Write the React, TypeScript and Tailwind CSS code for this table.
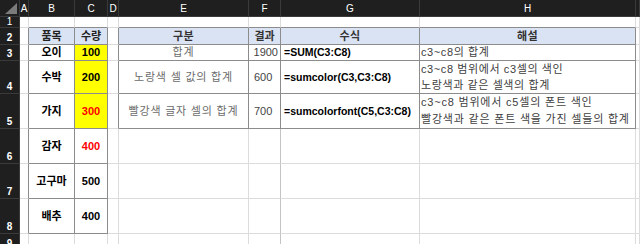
import React from "react";

const FONT = { fontFamily: '"Liberation Sans", "Noto Sans CJK KR", sans-serif' };

const COLS = ["", "A", "B", "C", "D", "E", "F", "G", "H", ""];

function content(r: number, c: number): React.ReactNode {
  const key = `${r}-${c}`;
  const map: Record<string, React.ReactNode> = {
    "2-2": <span className="w-full text-center font-bold text-[#222]">품목</span>,
    "2-3": <span className="w-full text-center font-bold text-[#222]">수량</span>,
    "2-5": <span className="w-full text-center font-semibold tracking-[0.5px] text-[#333]">구분</span>,
    "2-6": <span className="w-full text-center font-semibold text-[#333]">결과</span>,
    "2-7": <span className="w-full text-center font-semibold tracking-[0.5px] text-[#333]">수식</span>,
    "2-8": <span className="w-full text-center font-semibold tracking-[0.5px] text-[#333]">해설</span>,
    "3-2": <span className="w-full text-center font-bold text-black">오이</span>,
    "4-2": <span className="w-full text-center font-bold text-black">수박</span>,
    "5-2": <span className="w-full text-center font-bold text-black">가지</span>,
    "6-2": <span className="w-full text-center font-bold text-black">감자</span>,
    "7-2": <span className="w-full text-center font-bold text-black">고구마</span>,
    "8-2": <span className="w-full text-center font-bold text-black">배추</span>,
    "3-3": <span className="w-full text-center font-bold text-black">100</span>,
    "4-3": <span className="w-full text-center font-bold text-black">200</span>,
    "5-3": <span className="w-full text-center font-bold text-[#ff0000]">300</span>,
    "6-3": <span className="w-full text-center font-bold text-[#ff0000]">400</span>,
    "7-3": <span className="w-full text-center font-bold text-black">500</span>,
    "8-3": <span className="w-full text-center font-bold text-black">400</span>,
    "3-5": <span className="w-full text-center tracking-[0.8px] text-[#6b6b6b]">합계</span>,
    "4-5": <span className="w-full text-center tracking-[0.8px] text-[#6b6b6b]">노랑색 셀 값의 합계</span>,
    "5-5": <span className="w-full text-center tracking-[0.8px] text-[#6b6b6b]">빨강색 글자 셀의 합계</span>,
    "3-6": <span className="w-full pr-[2px] text-right text-[#444]">1900</span>,
    "4-6": <span className="w-full pl-[5px] text-left text-[#444]">600</span>,
    "5-6": <span className="w-full pl-[5px] text-left text-[#444]">700</span>,
    "3-7": <span className="w-full pl-[3px] text-left text-[10.5px] font-bold text-black">=SUM(C3:C8)</span>,
    "4-7": <span className="w-full pl-[3px] text-left text-[10.5px] font-bold text-black">=sumcolor(C3,C3:C8)</span>,
    "5-7": <span className="w-full pl-[3px] text-left text-[10.5px] font-bold text-black">=sumcolorfont(C5,C3:C8)</span>,
    "3-8": <span className="w-full pl-[1px] text-left tracking-[0.6px] text-[#404040]">c3~c8의 합계</span>,
    "4-8": (
      <div className="flex w-full flex-col gap-[5px] pl-[1px] text-left tracking-[0.6px] text-[#404040]">
        <span>c3~c8 범위에서 c3셀의 색인</span>
        <span>노랑색과 같은 셀색의 합계</span>
      </div>
    ),
    "5-8": (
      <div className="flex w-full flex-col gap-[6px] pl-[1px] text-left tracking-[0.8px] text-[#404040]">
        <span>c3~c8 범위에서 c5셀의 폰트 색인</span>
        <span>빨강색과 같은 폰트 색을 가진 셀들의 합계</span>
      </div>
    ),
  };
  return map[key];
}

function Cell({ r, c }: { r: number; c: number }) {
  if (r === 0) {
    if (c === 0) {
      return (
        <div className="relative border-r border-b border-r-[#3a3a3a] border-b-[#3a3a3a] bg-[#1f1f1f]">
          <svg className="absolute right-[2px] bottom-[2px]" width="12" height="11" viewBox="0 0 12 11">
            <polygon points="12,0 12,11 0,11" fill="#7b7b7b" />
          </svg>
        </div>
      );
    }
    return (
      <div className="flex items-center justify-center border-r border-b border-r-[#3a3a3a] border-b-[#3a3a3a] bg-[#1f1f1f] text-[10px] text-white">
        {COLS[c]}
      </div>
    );
  }
  if (c === 0) {
    return (
      <div
        className={
          r === 1
            ? "flex items-start justify-center overflow-hidden border-r border-b border-r-[#3a3a3a] border-b-[#3a3a3a] bg-[#1f1f1f] text-[10px] leading-none text-white"
            : "flex items-end justify-center overflow-hidden border-r border-b border-r-[#3a3a3a] border-b-[#3a3a3a] bg-[#1f1f1f] pb-[1px] text-[10px] font-semibold leading-none text-white"
        }
      >
        {r}
      </div>
    );
  }

  const rightDark = (r >= 2 && r <= 8 && c >= 1 && c <= 3) || (r >= 2 && r <= 5 && c >= 4 && c <= 8);
  const rightMid = r >= 6 && c === 6;
  const bottomDark =
    (r === 1 && (c === 2 || c === 3 || (c >= 5 && c <= 8))) ||
    (r >= 2 && r <= 8 && (c === 2 || c === 3)) ||
    (r >= 2 && r <= 5 && c >= 5 && c <= 8);
  const headerFill = r === 2 && (c === 2 || c === 3 || (c >= 5 && c <= 8));
  const yellow = c === 3 && r >= 3 && r <= 5;

  const rcls = rightDark ? "border-r-[#8c8c8c]" : rightMid ? "border-r-[#c4c4c4]" : "border-r-[#dcdcdc]";
  const bcls = bottomDark ? "border-b-[#8c8c8c]" : "border-b-[#dcdcdc]";
  const bg = headerFill ? "bg-[#dae3f3]" : yellow ? "bg-[#ffff00]" : "bg-white";

  return (
    <div className={`flex items-center overflow-hidden whitespace-nowrap border-r border-b text-[11px] leading-none ${rcls} ${bcls} ${bg}`}>
      {content(r, c)}
    </div>
  );
}

export default function App() {
  const rows = Array.from({ length: 10 }, (_, i) => i);
  const cols = Array.from({ length: 10 }, (_, i) => i);
  return (
    <div className="h-[244px] w-[640px] overflow-hidden bg-white" style={FONT}>
      <div className="grid grid-cols-[20px_9px_46px_33px_11px_130px_32px_139px_216px_4px] grid-rows-[17px_11px_17px_16px_33px_35px_35px_35px_35px_17px]">
        {rows.map((r) => cols.map((c) => <Cell key={`${r}-${c}`} r={r} c={c} />))}
      </div>
    </div>
  );
}
